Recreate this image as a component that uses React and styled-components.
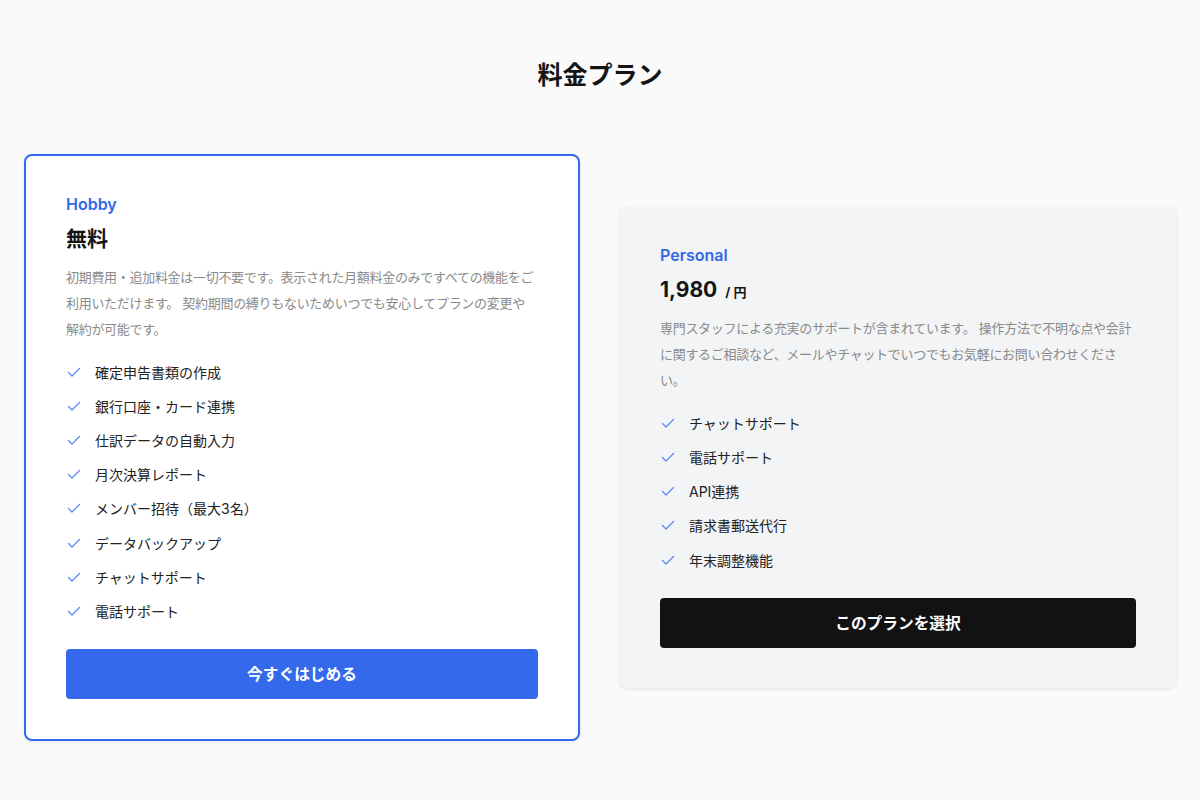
import styled, { createGlobalStyle } from "styled-components";

const GlobalStyle = createGlobalStyle`
    body {
        margin: 0;
        background: #fafafa;
        font-family: "Inter", "Noto Sans CJK JP", sans-serif;
        color: #141414;
    }
`;

const plans = [
    {
        name: "Hobby",
        price: "無料",
        description:
            "初期費用・追加料金は一切不要です。表示された月額料金のみですべての機能をご利用いただけます。 契約期間の縛りもないためいつでも安心してプランの変更や\n解約が可能です。",
        features: [
            "確定申告書類の作成",
            "銀行口座・カード連携",
            "仕訳データの自動入力",
            "月次決算レポート",
            "メンバー招待（最大3名）",
            "データバックアップ",
            "チャットサポート",
            "電話サポート",
        ],
        button: "今すぐはじめる",
        featured: true,
    },
    {
        name: "Personal",
        price: "1,980",
        unit: "/ 円",
        description:
            "専門スタッフによる充実のサポートが含まれています。 操作方法で不明な点や会計に関するご相談など、メールやチャットでいつでもお気軽にお問い合わせください。",
        features: ["チャットサポート", "電話サポート", "API連携", "請求書郵送代行", "年末調整機能"],
        button: "このプランを選択",
        featured: false,
    },
];

const Check = () => (
    <svg width="14" height="14" viewBox="0 0 14 14" fill="none">
        <polyline
            points="1.5,7.5 5,11 12.5,3.5"
            stroke="#5b8bf2"
            strokeWidth="1.3"
            strokeLinecap="round"
            strokeLinejoin="round"
        />
    </svg>
);

const App = () => {
    return (
        <Page>
            <GlobalStyle />
            <Title>料金プラン</Title>
            <Grid>
                {plans.map((plan) => (
                    <Card key={plan.name} $featured={plan.featured}>
                        <PlanName>{plan.name}</PlanName>
                        <Price>
                            <Amount>{plan.price}</Amount>
                            {plan.unit && <Unit>{plan.unit}</Unit>}
                        </Price>
                        <Description>{plan.description}</Description>
                        <Features>
                            {plan.features.map((f) => (
                                <Feature key={f}>
                                    <Check />
                                    <span>{f}</span>
                                </Feature>
                            ))}
                        </Features>
                        <Button $featured={plan.featured}>{plan.button}</Button>
                    </Card>
                ))}
            </Grid>
        </Page>
    );
};

const Page = styled.div`
    min-height: 800px;
    box-sizing: border-box;
    padding: 59px 24px 40px;
`;

const Title = styled.h1`
    margin: 0 0 63px;
    text-align: center;
    font-size: 25px;
    line-height: 32px;
    font-weight: 700;
    color: #141414;
`;

const Grid = styled.div`
    display: grid;
    grid-template-columns: 1fr 1fr;
    gap: 40px;
    align-items: center;
`;

const Card = styled.div`
    display: flex;
    flex-direction: column;
    padding: 38px 40px 40px;
    border-radius: 8px;
    background: ${(p) => (p.$featured ? "#ffffff" : "#f3f4f6")};
    border: ${(p) => (p.$featured ? "2px solid #3469eb" : "none")};
    box-shadow: ${(p) =>
        p.$featured ? "0 1px 4px rgba(0, 0, 0, 0.08)" : "0 1px 4px rgba(0, 0, 0, 0.1)"};
`;

const PlanName = styled.div`
    font-size: 16px;
    line-height: 20px;
    font-weight: 600;
    color: #3169e8;
`;

const Price = styled.div`
    display: flex;
    align-items: baseline;
    gap: 8px;
    height: 30px;
    margin-top: 10px;
    color: #141414;
`;

const Amount = styled.span`
    font-size: 21px;
    line-height: 30px;
    font-weight: 700;
`;

const Unit = styled.span`
    font-size: 13px;
    line-height: 1;
    font-weight: 700;
`;

const Description = styled.p`
    margin: 10px 0 0;
    font-size: 13px;
    letter-spacing: -0.3px;
    line-height: 26px;
    color: #8a8a8a;
    white-space: pre-line;
`;

const Features = styled.ul`
    list-style: none;
    margin: 13px 0 0;
    padding: 0;
`;

const Feature = styled.li`
    display: flex;
    align-items: center;
    gap: 14px;
    height: 34.1px;
    padding-left: 1px;
    font-size: 14px;
    color: #222;
`;

const Button = styled.button`
    margin-top: 21px;
    height: 50px;
    border: none;
    border-radius: 4px;
    background: ${(p) => (p.$featured ? "#3469eb" : "#121212")};
    color: #fff;
    font-family: inherit;
    font-size: 15.7px;
    font-weight: 700;
    cursor: pointer;
`;

export default App;
